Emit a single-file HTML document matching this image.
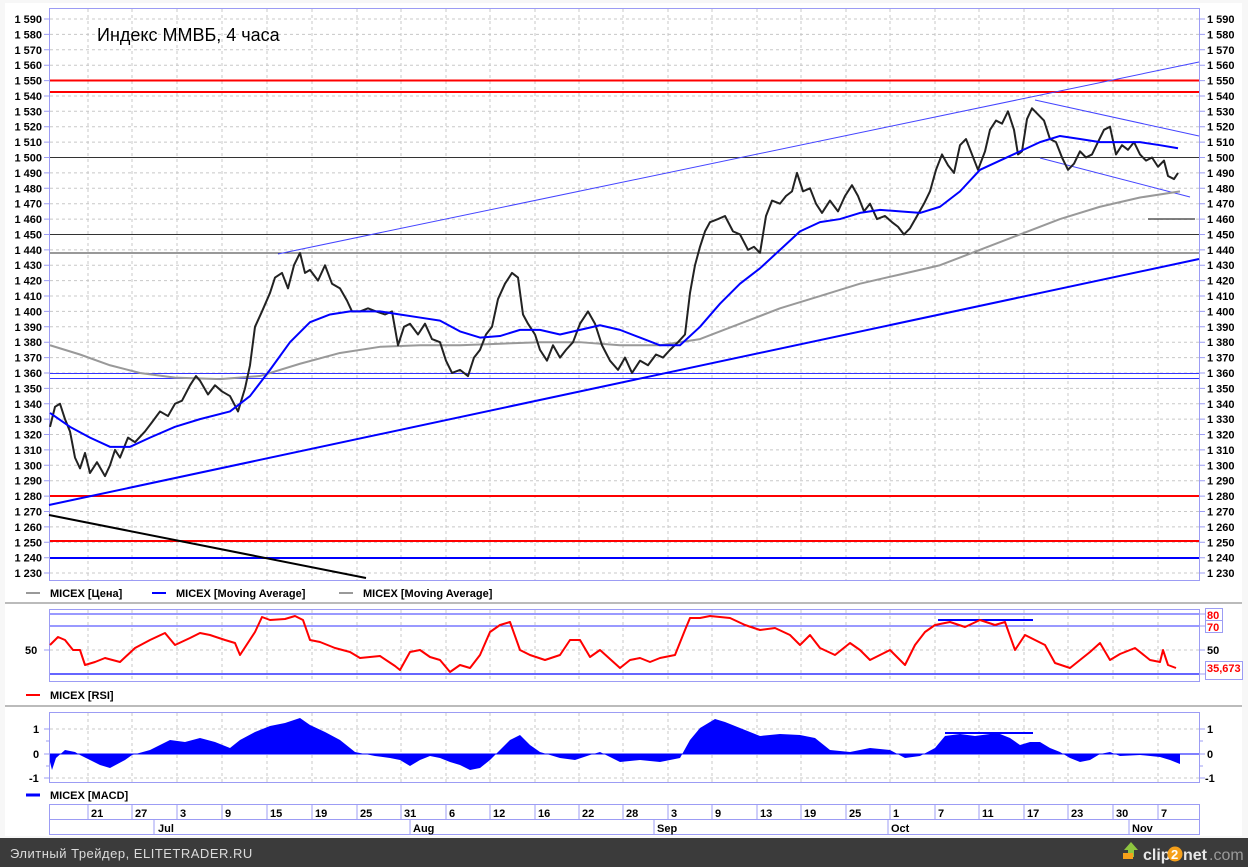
<!DOCTYPE html>
<html><head><meta charset="utf-8"><style>
html,body{margin:0;padding:0;width:1248px;height:867px;overflow:hidden;background:#fff;}
svg text{font-family:"Liberation Sans",sans-serif;}
.t{font-size:11px;font-weight:bold;fill:#000;}
</style></head><body>
<svg width="1248" height="867" viewBox="0 0 1248 867" xmlns="http://www.w3.org/2000/svg">
<rect x="0" y="0" width="1248" height="838" fill="#f7f7f7"/>
<rect x="5" y="3" width="1237" height="833" fill="#fff"/>
<rect x="49.5" y="8.5" width="1150" height="572" fill="#fff" stroke="#9c9cf4"/>
<g stroke="#c8c8c8" stroke-dasharray="3,3" stroke-width="1">
<path d="M88 9V580M132 9V580M177 9V580M222 9V580M267 9V580M312 9V580M357 9V580M401 9V580M446 9V580M490 9V580M535 9V580M579 9V580M623 9V580M668 9V580M712 9V580M757 9V580M801 9V580M846 9V580M890 9V580M935 9V580M979 9V580M1024 9V580M1068 9V580M1113 9V580M1158 9V580"/>
<path d="M50 19H1199M50 34.4H1199M50 49.8H1199M50 65.2H1199M50 80.6H1199M50 96H1199M50 111.3H1199M50 126.7H1199M50 142.1H1199M50 157.5H1199M50 172.9H1199M50 188.3H1199M50 203.7H1199M50 219.1H1199M50 234.5H1199M50 249.9H1199M50 265.2H1199M50 280.6H1199M50 296H1199M50 311.4H1199M50 326.8H1199M50 342.2H1199M50 357.6H1199M50 373H1199M50 388.4H1199M50 403.8H1199M50 419.1H1199M50 434.5H1199M50 449.9H1199M50 465.3H1199M50 480.7H1199M50 496.1H1199M50 511.5H1199M50 526.9H1199M50 542.3H1199M50 557.7H1199M50 573H1199"/>
</g>
<g stroke="#9c9cf4">
<path d="M44 19H49M44 34.4H49M44 49.8H49M44 65.2H49M44 80.6H49M44 96H49M44 111.3H49M44 126.7H49M44 142.1H49M44 157.5H49M44 172.9H49M44 188.3H49M44 203.7H49M44 219.1H49M44 234.5H49M44 249.9H49M44 265.2H49M44 280.6H49M44 296H49M44 311.4H49M44 326.8H49M44 342.2H49M44 357.6H49M44 373H49M44 388.4H49M44 403.8H49M44 419.1H49M44 434.5H49M44 449.9H49M44 465.3H49M44 480.7H49M44 496.1H49M44 511.5H49M44 526.9H49M44 542.3H49M44 557.7H49M44 573H49"/>
<path d="M1200 19H1205M1200 34.4H1205M1200 49.8H1205M1200 65.2H1205M1200 80.6H1205M1200 96H1205M1200 111.3H1205M1200 126.7H1205M1200 142.1H1205M1200 157.5H1205M1200 172.9H1205M1200 188.3H1205M1200 203.7H1205M1200 219.1H1205M1200 234.5H1205M1200 249.9H1205M1200 265.2H1205M1200 280.6H1205M1200 296H1205M1200 311.4H1205M1200 326.8H1205M1200 342.2H1205M1200 357.6H1205M1200 373H1205M1200 388.4H1205M1200 403.8H1205M1200 419.1H1205M1200 434.5H1205M1200 449.9H1205M1200 465.3H1205M1200 480.7H1205M1200 496.1H1205M1200 511.5H1205M1200 526.9H1205M1200 542.3H1205M1200 557.7H1205M1200 573H1205"/>
</g>
<g text-anchor="end">
<text x="42" y="23" class="t">1 590</text><text x="42" y="38.4" class="t">1 580</text><text x="42" y="53.8" class="t">1 570</text><text x="42" y="69.2" class="t">1 560</text><text x="42" y="84.6" class="t">1 550</text><text x="42" y="100" class="t">1 540</text><text x="42" y="115.3" class="t">1 530</text><text x="42" y="130.7" class="t">1 520</text><text x="42" y="146.1" class="t">1 510</text><text x="42" y="161.5" class="t">1 500</text><text x="42" y="176.9" class="t">1 490</text><text x="42" y="192.3" class="t">1 480</text><text x="42" y="207.7" class="t">1 470</text><text x="42" y="223.1" class="t">1 460</text><text x="42" y="238.5" class="t">1 450</text><text x="42" y="253.9" class="t">1 440</text><text x="42" y="269.2" class="t">1 430</text><text x="42" y="284.6" class="t">1 420</text><text x="42" y="300" class="t">1 410</text><text x="42" y="315.4" class="t">1 400</text><text x="42" y="330.8" class="t">1 390</text><text x="42" y="346.2" class="t">1 380</text><text x="42" y="361.6" class="t">1 370</text><text x="42" y="377" class="t">1 360</text><text x="42" y="392.4" class="t">1 350</text><text x="42" y="407.8" class="t">1 340</text><text x="42" y="423.1" class="t">1 330</text><text x="42" y="438.5" class="t">1 320</text><text x="42" y="453.9" class="t">1 310</text><text x="42" y="469.3" class="t">1 300</text><text x="42" y="484.7" class="t">1 290</text><text x="42" y="500.1" class="t">1 280</text><text x="42" y="515.5" class="t">1 270</text><text x="42" y="530.9" class="t">1 260</text><text x="42" y="546.3" class="t">1 250</text><text x="42" y="561.7" class="t">1 240</text><text x="42" y="577" class="t">1 230</text>
</g>
<g>
<text x="1207" y="23" class="t">1 590</text><text x="1207" y="38.4" class="t">1 580</text><text x="1207" y="53.8" class="t">1 570</text><text x="1207" y="69.2" class="t">1 560</text><text x="1207" y="84.6" class="t">1 550</text><text x="1207" y="100" class="t">1 540</text><text x="1207" y="115.3" class="t">1 530</text><text x="1207" y="130.7" class="t">1 520</text><text x="1207" y="146.1" class="t">1 510</text><text x="1207" y="161.5" class="t">1 500</text><text x="1207" y="176.9" class="t">1 490</text><text x="1207" y="192.3" class="t">1 480</text><text x="1207" y="207.7" class="t">1 470</text><text x="1207" y="223.1" class="t">1 460</text><text x="1207" y="238.5" class="t">1 450</text><text x="1207" y="253.9" class="t">1 440</text><text x="1207" y="269.2" class="t">1 430</text><text x="1207" y="284.6" class="t">1 420</text><text x="1207" y="300" class="t">1 410</text><text x="1207" y="315.4" class="t">1 400</text><text x="1207" y="330.8" class="t">1 390</text><text x="1207" y="346.2" class="t">1 380</text><text x="1207" y="361.6" class="t">1 370</text><text x="1207" y="377" class="t">1 360</text><text x="1207" y="392.4" class="t">1 350</text><text x="1207" y="407.8" class="t">1 340</text><text x="1207" y="423.1" class="t">1 330</text><text x="1207" y="438.5" class="t">1 320</text><text x="1207" y="453.9" class="t">1 310</text><text x="1207" y="469.3" class="t">1 300</text><text x="1207" y="484.7" class="t">1 290</text><text x="1207" y="500.1" class="t">1 280</text><text x="1207" y="515.5" class="t">1 270</text><text x="1207" y="530.9" class="t">1 260</text><text x="1207" y="546.3" class="t">1 250</text><text x="1207" y="561.7" class="t">1 240</text><text x="1207" y="577" class="t">1 230</text>
</g>
<text x="97" y="41" font-size="18" fill="#000">Индекс ММВБ, 4 часа</text>
<g>
<line x1="50" y1="80.5" x2="1199" y2="80.5" stroke="#f00" stroke-width="2"/>
<line x1="50" y1="92" x2="1199" y2="92" stroke="#f00" stroke-width="2"/>
<line x1="50" y1="157.5" x2="1199" y2="157.5" stroke="#333" stroke-width="1"/>
<line x1="50" y1="234.5" x2="1199" y2="234.5" stroke="#333" stroke-width="1"/>
<line x1="50" y1="253" x2="1199" y2="253" stroke="#333" stroke-width="1"/>
<line x1="1148" y1="219" x2="1195" y2="219" stroke="#000" stroke-width="1"/>
<line x1="50" y1="373.5" x2="1199" y2="373.5" stroke="#33f" stroke-width="1"/>
<line x1="50" y1="378.5" x2="1199" y2="378.5" stroke="#33f" stroke-width="1"/>
<line x1="50" y1="496" x2="1199" y2="496" stroke="#f00" stroke-width="2"/>
<line x1="50" y1="541" x2="1199" y2="541" stroke="#f00" stroke-width="2"/>
<line x1="50" y1="558" x2="1199" y2="558" stroke="#00f" stroke-width="2"/>
<line x1="49" y1="505" x2="1199" y2="259" stroke="#00f" stroke-width="2"/>
<line x1="278" y1="254" x2="1199" y2="62" stroke="#44f" stroke-width="1"/>
<line x1="1035" y1="100" x2="1199" y2="136" stroke="#44f" stroke-width="1"/>
<line x1="1040" y1="158" x2="1190" y2="197" stroke="#44f" stroke-width="1"/>
<line x1="49" y1="515" x2="366" y2="578" stroke="#000" stroke-width="2"/>
</g>
<g transform="matrix(1 0 0 1.539 0 19)" fill="none" stroke-linejoin="round">
<polyline vector-effect="non-scaling-stroke" stroke="#999" stroke-width="2" points="50,212 80,218 110,225 140,230 175,233 220,234 260,232 300,224 340,217 380,213 420,212 460,212 500,211 540,210 580,210 620,212 660,212 700,208 740,198 780,188 820,180 860,172 900,166 940,160 980,150 1020,140 1060,130 1100,122 1140,116 1180,112"/>
<polyline vector-effect="non-scaling-stroke" stroke="#222" stroke-width="2" points="50,265 55,252 60,250 65,260 70,268 75,285 80,292 85,282 90,295 97,288 105,297 110,290 115,280 120,285 128,272 135,275 145,268 152,262 160,255 168,258 175,250 182,248 190,238 196,232 200,235 208,244 215,238 222,242 230,245 238,255 245,240 250,225 255,200 262,190 270,178 275,168 282,165 288,175 294,160 300,152 305,165 310,163 318,170 325,160 332,172 340,175 347,183 352,190 360,190 368,188 376,190 385,192 392,190 398,212 404,200 410,198 418,205 425,198 432,208 440,210 446,222 452,230 460,228 468,232 474,220 480,215 486,205 492,200 498,182 505,172 512,165 518,168 523,192 528,198 535,205 540,215 547,222 553,212 560,220 566,215 573,210 580,198 588,190 595,198 602,212 610,222 618,228 625,220 632,230 640,222 648,225 656,218 663,220 670,215 678,210 685,205 690,178 695,160 700,148 705,138 710,132 718,130 725,128 733,138 740,140 748,150 754,148 760,152 766,128 772,118 780,120 786,115 792,112 797,100 803,112 810,110 816,120 822,126 830,118 838,125 845,115 852,108 858,115 864,125 870,120 877,130 885,128 892,132 898,135 904,140 910,136 917,128 924,120 930,112 936,98 942,88 948,95 954,100 960,82 966,78 972,88 978,98 985,86 990,72 996,66 1002,68 1008,60 1014,72 1018,88 1022,86 1027,65 1032,58 1038,62 1044,66 1050,78 1056,80 1062,90 1068,98 1074,94 1080,86 1086,90 1092,88 1098,80 1104,72 1110,70 1116,88 1122,82 1128,85 1134,80 1140,88 1146,92 1152,90 1158,96 1164,92 1168,102 1174,104 1178,100"/>
<polyline vector-effect="non-scaling-stroke" stroke="#00f" stroke-width="2" points="50,256 70,265 90,272 110,278 130,278 150,272 175,265 200,260 230,255 250,245 270,228 290,210 310,197 330,192 350,190 380,190 400,192 420,194 440,196 460,203 480,207 500,206 520,202 540,202 560,205 580,202 600,199 620,202 640,207 660,212 680,212 700,200 720,185 740,172 760,162 780,150 800,138 820,132 840,130 860,126 880,124 900,125 920,126 940,122 960,112 980,98 1000,92 1020,86 1040,80 1060,76 1080,78 1100,80 1120,80 1140,80 1160,82 1178,84"/>
</g>
<line x1="26" y1="593" x2="40" y2="593" stroke="#333" stroke-width="1"/>
<text x="50" y="597" class="t">MICEX [Цена]</text>
<line x1="152" y1="593" x2="166" y2="593" stroke="#00f" stroke-width="2"/>
<text x="176" y="597" class="t">MICEX [Moving Average]</text>
<line x1="339" y1="593" x2="353" y2="593" stroke="#999" stroke-width="2"/>
<text x="363" y="597" class="t">MICEX [Moving Average]</text>
<line x1="5" y1="603" x2="1242" y2="603" stroke="#bbb" stroke-width="2"/>
<rect x="49.5" y="609.5" width="1150" height="72" fill="#fff" stroke="#9c9cf4"/>
<g stroke="#c8c8c8" stroke-dasharray="3,3"><path d="M88 610V681M132 610V681M177 610V681M222 610V681M267 610V681M312 610V681M357 610V681M401 610V681M446 610V681M490 610V681M535 610V681M579 610V681M623 610V681M668 610V681M712 610V681M757 610V681M801 610V681M846 610V681M890 610V681M935 610V681M979 610V681M1024 610V681M1068 610V681M1113 610V681M1158 610V681M50 650H1199"/></g>
<line x1="50" y1="614" x2="1199" y2="614" stroke="#33f"/>
<line x1="50" y1="626" x2="1199" y2="626" stroke="#33f"/>
<line x1="50" y1="674" x2="1199" y2="674" stroke="#66f" stroke-width="2"/>
<line x1="938" y1="620" x2="1033" y2="620" stroke="#00f" stroke-width="2"/>
<polyline fill="none" stroke="#f00" stroke-width="2" stroke-linejoin="round" points="50,645 58,637 65,640 73,650 80,650 85,665 95,662 105,658 120,662 135,648 150,640 165,633 175,645 190,638 200,633 210,635 225,640 235,643 240,655 255,632 262,617 270,620 285,619 295,616 303,620 310,640 320,642 335,648 350,652 360,658 380,656 395,666 400,670 410,652 420,650 430,657 440,660 450,672 460,665 470,668 480,655 490,632 500,625 510,622 520,650 530,655 545,660 560,655 570,640 580,640 590,657 600,650 620,668 630,660 640,658 650,662 660,658 675,655 685,630 690,618 700,618 710,616 720,617 730,618 745,625 760,630 775,628 790,635 800,645 810,635 820,648 835,655 850,643 860,650 870,660 880,655 890,650 905,665 915,645 925,632 935,625 950,622 965,627 980,620 995,625 1005,622 1015,650 1025,635 1035,640 1045,645 1055,663 1070,668 1080,660 1090,652 1100,643 1110,660 1120,654 1135,648 1150,660 1160,662 1163,650 1168,665 1176,668"/>
<path d="M1200 614H1205M1200 626H1205M1200 650H1205M1200 674H1205M44 650H49" stroke="#9c9cf4"/>
<text x="25" y="654" class="t">50</text>
<rect x="1205.5" y="608.5" width="17" height="12" fill="#fff" stroke="#9c9cf4"/><text x="1207" y="619" class="t" style="fill:#f00">80</text>
<rect x="1205.5" y="620.5" width="17" height="12" fill="#fff" stroke="#9c9cf4"/><text x="1207" y="631" class="t" style="fill:#f00">70</text>
<text x="1207" y="654" class="t">50</text>
<rect x="1205.5" y="661.5" width="37" height="18" fill="#fff" stroke="#9c9cf4"/><text x="1207" y="672" class="t" style="fill:#f00">35,673</text>
<line x1="26" y1="695" x2="40" y2="695" stroke="#f00" stroke-width="2"/>
<text x="50" y="699" class="t">MICEX [RSI]</text>
<line x1="5" y1="706" x2="1242" y2="706" stroke="#bbb" stroke-width="2"/>
<rect x="49.5" y="712.5" width="1150" height="70" fill="#fff" stroke="#9c9cf4"/>
<g stroke="#c8c8c8" stroke-dasharray="3,3"><path d="M88 713V782M132 713V782M177 713V782M222 713V782M267 713V782M312 713V782M357 713V782M401 713V782M446 713V782M490 713V782M535 713V782M579 713V782M623 713V782M668 713V782M712 713V782M757 713V782M801 713V782M846 713V782M890 713V782M935 713V782M979 713V782M1024 713V782M1068 713V782M1113 713V782M1158 713V782M50 729H1199M50 778H1199"/></g>
<line x1="50" y1="754" x2="1199" y2="754" stroke="#00f"/>
<polygon fill="#00f" points="50,754 50,762 52,770 56,758 65,750 75,752 80,755 90,760 100,765 110,768 125,760 132,755 150,750 160,745 170,740 185,742 200,738 215,742 230,748 240,740 255,732 270,726 285,723 300,718 310,725 325,732 340,740 355,752 375,756 390,758 400,760 410,766 420,760 430,756 440,758 450,762 460,765 470,770 480,768 490,760 500,750 510,740 520,735 530,745 540,752 560,758 575,760 590,755 600,752 620,762 640,760 660,762 680,758 690,740 700,728 715,719 725,722 740,728 760,736 780,734 800,735 815,738 830,750 850,752 870,748 890,750 905,758 920,756 935,748 945,736 960,734 975,736 990,734 1000,734 1010,738 1020,745 1030,742 1040,742 1050,748 1060,752 1070,758 1080,762 1090,760 1100,754 1110,752 1120,756 1140,755 1160,757 1170,760 1180,764 1180,754"/>
<line x1="945" y1="733" x2="1033" y2="733" stroke="#00f" stroke-width="2"/>
<path d="M1200 729H1205M1200 754H1205M1200 778H1205M1200 741H1203M1200 766H1203M44 729H49M44 754H49M44 778H49M46 741H49M46 766H49" stroke="#9c9cf4"/>
<text x="33" y="733" class="t">1</text><text x="33" y="758" class="t">0</text><text x="29" y="782" class="t">-1</text>
<text x="1207" y="733" class="t">1</text><text x="1207" y="758" class="t">0</text><text x="1205" y="782" class="t">-1</text>
<line x1="26" y1="795" x2="40" y2="795" stroke="#00f" stroke-width="3"/>
<text x="50" y="799" class="t">MICEX [MACD]</text>
<g fill="none" stroke="#9c9cf4">
<rect x="49.5" y="804.5" width="1150" height="15"/>
<rect x="49.5" y="819.5" width="1150" height="15"/>
<path d="M88 805V820M132 805V820M177 805V820M222 805V820M267 805V820M312 805V820M357 805V820M401 805V820M446 805V820M490 805V820M535 805V820M579 805V820M623 805V820M668 805V820M712 805V820M757 805V820M801 805V820M846 805V820M890 805V820M935 805V820M979 805V820M1024 805V820M1068 805V820M1113 805V820M1158 805V820M154 820V835M410 820V835M654 820V835M888 820V835M1129 820V835"/>
</g>
<g>
<text x="91" y="817" class="t">21</text><text x="135" y="817" class="t">27</text><text x="180" y="817" class="t">3</text><text x="225" y="817" class="t">9</text><text x="270" y="817" class="t">15</text><text x="315" y="817" class="t">19</text><text x="360" y="817" class="t">25</text><text x="404" y="817" class="t">31</text><text x="449" y="817" class="t">6</text><text x="493" y="817" class="t">12</text><text x="538" y="817" class="t">16</text><text x="582" y="817" class="t">22</text><text x="626" y="817" class="t">28</text><text x="671" y="817" class="t">3</text><text x="715" y="817" class="t">9</text><text x="760" y="817" class="t">13</text><text x="804" y="817" class="t">19</text><text x="849" y="817" class="t">25</text><text x="893" y="817" class="t">1</text><text x="938" y="817" class="t">7</text><text x="982" y="817" class="t">11</text><text x="1027" y="817" class="t">17</text><text x="1071" y="817" class="t">23</text><text x="1116" y="817" class="t">30</text><text x="1161" y="817" class="t">7</text>
<text x="158" y="832" class="t">Jul</text><text x="413" y="832" class="t">Aug</text><text x="657" y="832" class="t">Sep</text><text x="891" y="832" class="t">Oct</text><text x="1132" y="832" class="t">Nov</text>
</g>
<rect x="0" y="838" width="1248" height="29" fill="#3b3b3b"/>
<text x="10" y="858" font-size="13" fill="#dcdcdc" letter-spacing="0.5">Элитный Трейдер, ELITETRADER.RU</text>
<g>
<polygon points="1131,842 1124,850 1128,850 1128,857 1134,857 1134,850 1138,850" fill="#8ec63f"/>
<rect x="1123" y="853" width="10" height="6" fill="#f6a01a"/>
<text x="1143" y="860" font-size="16" font-weight="bold" fill="#e8e8e8">clip</text>
<circle cx="1175" cy="854" r="7.5" fill="#f6a01a"/>
<text x="1171" y="859" font-size="13" font-weight="bold" fill="#fff">2</text>
<text x="1183" y="860" font-size="16" font-weight="bold" fill="#e8e8e8">net</text>
<text x="1209" y="860" font-size="16" fill="#9a9a9a">.com</text>
</g>
</svg>
</body></html>
